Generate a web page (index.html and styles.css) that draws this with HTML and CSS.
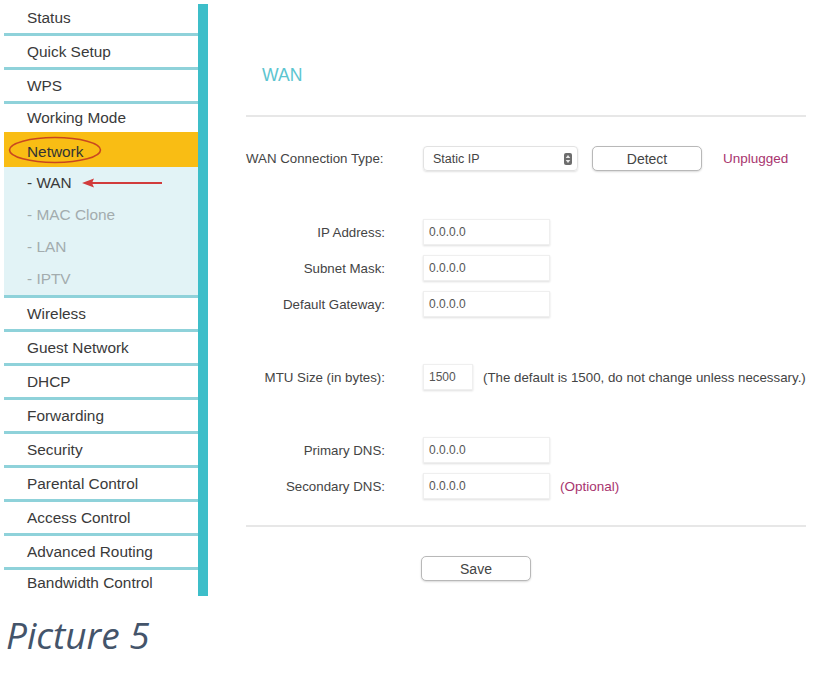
FILE: index.html
```html
<!DOCTYPE html>
<html>
<head>
<meta charset="utf-8">
<title>WAN</title>
<link rel="stylesheet" href="styles.css">
</head>
<body>
<div class="page">
  <div class="frame">
    <nav class="sidebar">
      <div class="item">Status</div>
      <div class="item">Quick Setup</div>
      <div class="item">WPS</div>
      <div class="item nb short">Working Mode</div>
      <div class="item active"><span class="circled">Network<svg class="oval" viewBox="0 0 94 28" preserveAspectRatio="none"><ellipse cx="47" cy="14" rx="45.5" ry="12.5" fill="none" stroke="#c9471f" stroke-width="1.6"/></svg></span></div>
      <div class="sub">
        <div class="subitem cur"><span class="pointed">- WAN<svg class="arrow" viewBox="0 0 82 10"><path d="M8 5 H80" stroke="#d13b3b" stroke-width="2" fill="none"/><path d="M0 5 L12 0.5 L10 5 L12 9.5 Z" fill="#d13b3b"/></svg></span></div>
        <div class="subitem">- MAC Clone</div>
        <div class="subitem">- LAN</div>
        <div class="subitem">- IPTV</div>
      </div>
      <div class="item">Wireless</div>
      <div class="item">Guest Network</div>
      <div class="item">DHCP</div>
      <div class="item">Forwarding</div>
      <div class="item">Security</div>
      <div class="item">Parental Control</div>
      <div class="item">Access Control</div>
      <div class="item">Advanced Routing</div>
      <div class="item nb last">Bandwidth Control</div>
    </nav>
    <div class="rail"></div>
    <main class="content">
      <h1 class="title">WAN</h1>
      <div class="rule"></div>
      <div class="row row-type">
        <span class="label label-left">WAN Connection Type:</span>
        <div class="controls">
          <div class="select"><span>Static IP</span><span class="spin"><svg viewBox="0 0 8 12"><rect x="0" y="0" width="8" height="12" rx="2" fill="#6d6d6d"/><path d="M4 2 L6.3 5 H1.7 Z M4 10 L6.3 7 H1.7 Z" fill="#e9e9e9"/></svg></span></div>
          <div class="btn detect">Detect</div>
          <span class="note-red">Unplugged</span>
        </div>
      </div>
      <div class="row row-ip">
        <span class="label">IP Address:</span>
        <div class="controls"><div class="field">0.0.0.0</div></div>
      </div>
      <div class="row row-tight">
        <span class="label">Subnet Mask:</span>
        <div class="controls"><div class="field">0.0.0.0</div></div>
      </div>
      <div class="row row-tight">
        <span class="label">Default Gateway:</span>
        <div class="controls"><div class="field">0.0.0.0</div></div>
      </div>
      <div class="row row-gap">
        <span class="label">MTU Size (in bytes):</span>
        <div class="controls"><div class="field small">1500</div><span class="hint">(The default is 1500, do not change unless necessary.)</span></div>
      </div>
      <div class="row row-gap">
        <span class="label">Primary DNS:</span>
        <div class="controls"><div class="field">0.0.0.0</div></div>
      </div>
      <div class="row row-tight">
        <span class="label">Secondary DNS:</span>
        <div class="controls"><div class="field">0.0.0.0</div><span class="note-red optional">(Optional)</span></div>
      </div>
      <div class="rule rule2"></div>
      <div class="btn save">Save</div>
    </main>
  </div>
  <p class="caption">Picture 5</p>
</div>
</body>
</html>
```
FILE: styles.css
```css
* { box-sizing: border-box; }
html, body { margin: 0; padding: 0; background: #fff; }
body { font-family: "Liberation Sans", Arial, sans-serif; color: #444; }

.page { width: 820px; height: 682px; overflow: hidden; }

.frame {
  display: flex;
  padding: 2px 0 0 4px;
  height: 596px;
}

.sidebar {
  width: 194px;
  height: 594px;
  overflow: hidden;
  display: flex;
  flex-direction: column;
  flex: none;
}

.item {
  height: 34px;
  flex: none;
  border-bottom: 3px solid #8fd2da;
  display: flex;
  align-items: center;
  padding-left: 23px;
  font-size: 15.4px;
  color: #3a3a3a;
  background: #fff;
}
.item.nb { border-bottom: none; }
.item.short { height: 28px; }
.item.last { height: 28px; padding-bottom: 2px; }

.item.active {
  height: 35px;
  background: #f9bd14;
  border-bottom: none;
  padding-top: 5px;
  color: #333;
}

.circled { position: relative; display: inline-block; }
.oval {
  position: absolute;
  left: -19px;
  top: -7px;
  width: 94px;
  height: 28px;
}

.sub {
  background: #e2f3f6;
  border-bottom: 3px solid #8fd2da;
  flex: none;
}
.subitem {
  height: 32px;
  display: flex;
  align-items: center;
  padding-left: 23px;
  font-size: 15.4px;
  color: #a3acae;
}
.subitem.cur { color: #3a3a3a; }

.pointed { position: relative; display: inline-block; }
.arrow {
  position: absolute;
  left: 55px;
  top: 4px;
  width: 82px;
  height: 10px;
}

.rail {
  width: 10px;
  height: 592px;
  margin-top: 2px;
  background: #3dbec9;
  flex: none;
}

.content {
  flex: 1;
  margin-top: 2px;
  padding-right: 14px;
  font-size: 13.3px;
}

.title {
  margin: 61px 0 0 54px;
  font-weight: normal;
  font-size: 17.6px;
  line-height: 20px;
  color: #5cc5d0;
}

.rule {
  margin: 30px 0 0 38px;
  height: 2px;
  background: #e7e7e7;
}
.rule2 { margin-top: 26px; }

.row {
  display: grid;
  grid-template-columns: 139px 1fr;
  column-gap: 38px;
  align-items: center;
  margin-left: 38px;
  height: 26px;
  margin-top: 10px;
}
.row-type { margin-top: 29px; height: 25px; }
.row-ip { margin-top: 48px; }
.row-gap { margin-top: 47px; }
.row-tight { margin-top: 10px; }

.label {
  text-align: right;
  color: #444;
  white-space: nowrap;
}
.label-left { text-align: left; }

.controls {
  display: flex;
  align-items: center;
  height: 100%;
}

.select {
  width: 155px;
  height: 25px;
  border: 1px solid #e2e2e2;
  border-radius: 4px;
  box-shadow: 0 1px 2px rgba(0,0,0,0.12);
  display: flex;
  align-items: center;
  justify-content: space-between;
  padding: 0 5px 0 9px;
  font-size: 12.5px;
  color: #444;
}
.spin { display: flex; }
.spin svg { width: 8px; height: 12px; }

.btn {
  height: 25px;
  border: 1px solid #b8b8b8;
  border-radius: 5px;
  box-shadow: 0 1px 2px rgba(0,0,0,0.15);
  display: flex;
  align-items: center;
  justify-content: center;
  font-size: 14px;
  color: #444;
  background: #fff;
}
.detect { width: 110px; margin-left: 14px; }

.note-red { color: #a8346e; font-size: 13.5px; margin-left: 21px; }
.optional { margin-left: 10px; }

.field {
  width: 127px;
  height: 26px;
  border: 1px solid #efefef;
  box-shadow: 0 1px 2px rgba(0,0,0,0.13);
  display: flex;
  align-items: center;
  padding-left: 5px;
  font-size: 12px;
  color: #555;
  background: #fff;
}
.field.small { width: 50px; }

.hint {
  margin-left: 10px;
  white-space: nowrap;
  color: #444;
}

.save {
  width: 110px;
  margin: 29px 0 0 213px;
}

.caption {
  margin: 15px 0 0 6px;
  font-family: "Open Sans", "Noto Sans", sans-serif;
  font-style: italic;
  font-size: 37px;
  line-height: 48px;
  color: #44546a;
}
```
